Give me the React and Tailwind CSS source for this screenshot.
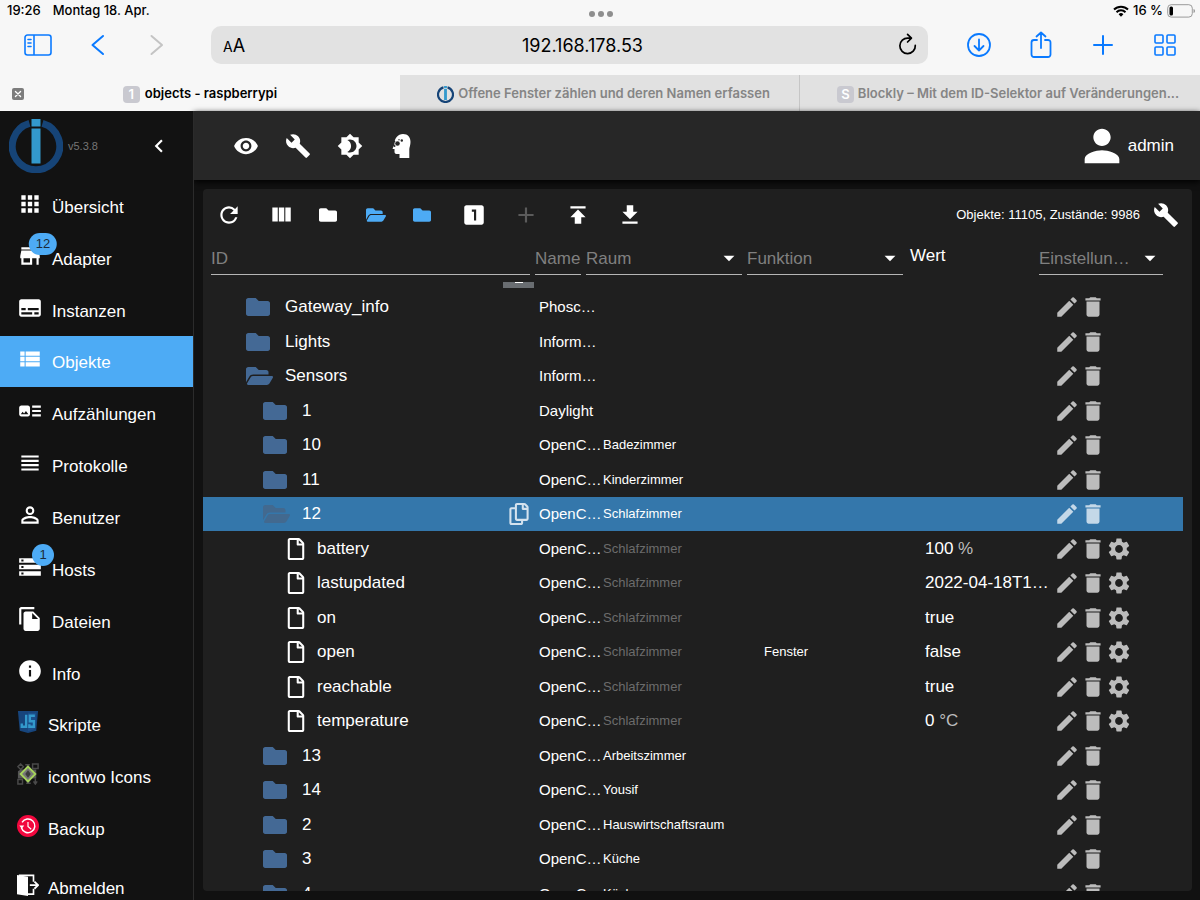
import React from "react";
import clsx from "clsx";
import {
  MdAdd,
  MdApps,
  MdArrowDropDown,
  MdArtTrack,
  MdBrightness4,
  MdBuild,
  MdChevronLeft,
  MdDelete,
  MdEdit,
  MdFileCopy,
  MdGetApp,
  MdInfo,
  MdLooksOne,
  MdPermIdentity,
  MdPerson,
  MdPublish,
  MdRefresh,
  MdSettings,
  MdStorage,
  MdStore,
  MdSubtitles,
  MdViewHeadline,
  MdViewList,
  MdVisibility,
} from "react-icons/md";
import { FaFolder, FaFolderOpen, FaRegCopy, FaRegFile } from "react-icons/fa";

const NAV_ITEMS = [
  { label: "Übersicht", icon: MdApps },
  { label: "Adapter", icon: MdStore, badge: 12 },
  { label: "Instanzen", icon: MdSubtitles },
  { label: "Objekte", icon: MdViewList, active: true },
  { label: "Aufzählungen", icon: MdArtTrack },
  { label: "Protokolle", icon: MdViewHeadline },
  { label: "Benutzer", icon: MdPermIdentity },
  { label: "Hosts", icon: MdStorage, badge: 1 },
  { label: "Dateien", icon: MdFileCopy },
  { label: "Info", icon: MdInfo },
  { label: "Skripte", icon: ScriptIcon, small: true },
  { label: "icontwo Icons", icon: IcontwoIcon, small: true },
  { label: "Backup", icon: BackupIcon, small: true },
];

const ROWS = [
  { id: "Gateway_info", type: "folder", level: 0, name: "Phosc…" },
  { id: "Lights", type: "folder", level: 0, name: "Inform…" },
  { id: "Sensors", type: "open", level: 0, name: "Inform…" },
  { id: "1", type: "folder", level: 1, name: "Daylight" },
  { id: "10", type: "folder", level: 1, name: "OpenC…", room: "Badezimmer" },
  { id: "11", type: "folder", level: 1, name: "OpenC…", room: "Kinderzimmer" },
  { id: "12", type: "open", level: 1, name: "OpenC…", room: "Schlafzimmer", selected: true },
  { id: "battery", type: "state", level: 2, name: "OpenC…", room: "Schlafzimmer", value: "100", unit: "%" },
  { id: "lastupdated", type: "state", level: 2, name: "OpenC…", room: "Schlafzimmer", value: "2022-04-18T1…" },
  { id: "on", type: "state", level: 2, name: "OpenC…", room: "Schlafzimmer", value: "true" },
  { id: "open", type: "state", level: 2, name: "OpenC…", room: "Schlafzimmer", func: "Fenster", value: "false" },
  { id: "reachable", type: "state", level: 2, name: "OpenC…", room: "Schlafzimmer", value: "true" },
  { id: "temperature", type: "state", level: 2, name: "OpenC…", room: "Schlafzimmer", value: "0", unit: "°C" },
  { id: "13", type: "folder", level: 1, name: "OpenC…", room: "Arbeitszimmer" },
  { id: "14", type: "folder", level: 1, name: "OpenC…", room: "Yousif" },
  { id: "2", type: "folder", level: 1, name: "OpenC…", room: "Hauswirtschaftsraum" },
  { id: "3", type: "folder", level: 1, name: "OpenC…", room: "Küche" },
  { id: "4", type: "folder", level: 1, name: "OpenC…", room: "Küche" },
];

const INDENT = ["pl-[43px]", "pl-[60px]", "pl-[84px]"];

/* ---------- icons ---------- */

function ScriptIcon({ className }) {
  return (
    <svg viewBox="0 0 24 24" className={className}>
      <path d="M1 0h22l-2 21.500L12 24l-9-2.500z" fill="#17457c" />
      <path d="M12 2h9l-1.700 18L12 22z" fill="#1c4f8b" />
      <path d="M10 4v13.200H5.200V13.500M19.500 5.200H14v6h4.500v6h-5V14.500" fill="none" stroke="#3399cc" strokeWidth="2.600" />
    </svg>
  );
}

function IcontwoIcon({ className }) {
  return (
    <svg viewBox="0 0 24 24" className={className}>
      <g fill="none" stroke="#4a4a4a" strokeWidth="1.600">
        <path d="M4 1l3 3-3 3-3-3zM17 1h6v5h-6zM1 18h5v5H1z" />
        <path d="M20 17v5M18 20l2 3 2-3M9 2h5M10 22h5" />
      </g>
      <path d="M4 7h4l4-5 4 5h5v10h-5l-4 6-4-6H1V9z" fill="#555" />
      <path d="M12 4l8 8-8 8-8-8z" fill="#777" stroke="#a6d45c" strokeWidth="2" />
      <path d="M12 8l3 4-3 4-3-4z" fill="#3b3b3b" />
    </svg>
  );
}

function BackupIcon({ className }) {
  return (
    <svg viewBox="0 0 24 24" className={className}>
      <circle cx="12" cy="12" r="12" fill="#f2083e" />
      <path d="M4.800 14a7.500 7.500 0 1 0 .7-6" fill="none" stroke="#fff" strokeWidth="1.600" />
      <path d="M2.500 11.500h5.400L5.200 15z" fill="#fff" />
      <path d="M12 7.500v5l3.500 3" fill="none" stroke="#fff" strokeWidth="1.300" />
    </svg>
  );
}

function LogoutIcon({ className }) {
  return (
    <svg viewBox="0 0 24 24" className={className} fill="none" stroke="#fff" strokeWidth="1.800">
      <path d="M0 1l12 2v21L0 22z" fill="#fff" stroke="none" />
      <path d="M2 1.500h16v7M11 22h7v-6" />
      <path d="M14 12.200h8.500M19 8.300l4 3.900-4 3.900" strokeWidth="2" />
    </svg>
  );
}

function ExpertIcon({ className }) {
  return (
    <svg viewBox="0 0 24 24" className={className}>
      <path d="M13 0c5 0 7.500 3.400 7.500 8 0 3-1 5-1.200 7v9H9.500v-4h-3C5 20 4.500 19 4.500 17.800V15H3.300c-.6 0-.8-.5-.5-1L4.500 10.500C4 4.500 8 0 13 0z" fill="#fff" />
      <g fill="#272727">
        <circle cx="7.500" cy="9.500" r="2.300" />
        <circle cx="11.800" cy="6.500" r="1.200" />
        <circle cx="4.300" cy="7.500" r="1" />
        <circle cx="4.600" cy="12" r=".9" />
        <circle cx="9" cy="5.800" r=".7" />
      </g>
    </svg>
  );
}

function ColumnsIcon({ className }) {
  return (
    <svg viewBox="0 0 24 24" className={className} fill="currentColor">
      <path d="M10 18h5V5h-5v13zm-6 0h5V5H4v13zM16 5v13h5V5h-5z" />
    </svg>
  );
}

function BrokerLogo({ className, ring = "#164477", bar = "#3399cc" }) {
  return (
    <svg viewBox="0 0 54 54" className={className}>
      <path d="M20.500 4.300a23.700 23.700 0 1 0 13 0" fill="none" stroke={ring} strokeWidth="7" />
      <path d="M22.500 0h9v7.500h-9zM22.500 9.500h9v35h-9z" fill={bar} />
    </svg>
  );
}

function LineIcon({ className = "w-7 h-7", d, width = 2 }) {
  return (
    <svg
      viewBox="0 0 28 28"
      className={className}
      fill="none"
      stroke="currentColor"
      strokeWidth={width}
      strokeLinecap="round"
      strokeLinejoin="round"
    >
      <path d={d} />
    </svg>
  );
}

/* ---------- browser frame ---------- */

function StatusBar() {
  return (
    <div className="grid grid-cols-3 items-center h-[22px] pl-[7px] pr-[5px] text-[13px] font-medium">
      <div className="flex gap-3">
        <span>19:26</span>
        <span>Montag 18. Apr.</span>
      </div>
      <div className="flex justify-center gap-[3px] pt-[5px]">
        <span className="w-[6px] h-[6px] rounded-full bg-[#8e8e8e]" />
        <span className="w-[6px] h-[6px] rounded-full bg-[#8e8e8e]" />
        <span className="w-[6px] h-[6px] rounded-full bg-[#8e8e8e]" />
      </div>
      <div className="flex items-center justify-end gap-1">
        <svg viewBox="0 0 16 12" className="w-4 h-3" fill="none" stroke="#000" strokeWidth="2">
          <path d="M1 4.500a10 10 0 0 1 14 0M3.500 7.200a6.400 6.400 0 0 1 9 0" />
          <path d="M5.600 9.200a3.500 3.500 0 0 1 4.800 0L8 11.800z" fill="#000" stroke="none" />
        </svg>
        <span>16 %</span>
        <svg viewBox="0 0 28 14" className="w-7 h-[14px]">
          <rect x=".7" y=".7" width="24.600" height="12.400" rx="3.500" fill="none" stroke="#9a9a9a" />
          <rect x="2.500" y="2.500" width="3.500" height="9" rx="1.500" fill="#000" />
          <path d="M26.500 5v4c1-.3 1.500-1 1.500-2s-.5-1.700-1.500-2z" fill="#9a9a9a" />
        </svg>
      </div>
    </div>
  );
}

function NavBar() {
  return (
    <div className="flex items-center h-[46px] pl-2 pr-1 text-[#0a7aff]">
      <button className="w-[59px] flex justify-center" aria-label="Seitenleiste">
        <LineIcon d="M3.500 4h21a2.500 2.500 0 0 1 2.500 2.500v15a2.500 2.500 0 0 1-2.500 2.500h-21A2.500 2.500 0 0 1 1 21.500v-15A2.500 2.500 0 0 1 3.500 4zM10 4v20M4 8.500h3M4 12h3M4 15.500h3" width={1.6} />
      </button>
      <button className="w-[59px] flex justify-center" aria-label="Zurück">
        <LineIcon d="M20 5L9.500 14 20 23" />
      </button>
      <button className="w-[59px] flex justify-center text-[#c4c4c4]" aria-label="Vorwärts">
        <LineIcon d="M9.500 5L20 14 9.500 23" />
      </button>
      <div className="flex-1 flex items-center h-[38px] ml-[26px] mr-5 rounded-[10px] bg-[#e2e2e2] text-black">
        <button className="w-[66px] pl-3 pt-[2px] text-left text-[18px] leading-6" aria-label="Darstellung">
          <span className="text-[14px]">A</span>A
        </button>
        <input
          className="flex-1 min-w-0 bg-transparent text-center text-[18px] outline-none"
          defaultValue="192.168.178.53"
          aria-label="Adresse"
        />
        <button className="w-10 flex justify-center" aria-label="Neu laden">
          <LineIcon className="w-6 h-6" d="M22.500 14.500a9 9 0 1 1-8.500-8.500h3.500M13.500 1.500l4.500 4.500-4.500 4.500" />
        </button>
      </div>
      <button className="w-[62px] flex justify-center" aria-label="Downloads">
        <LineIcon d="M14 3a11 11 0 1 1 0 22 11 11 0 0 1 0-22zM14 8.500v11M9.500 15l4.500 4.500 4.500-4.500" width={1.8} />
      </button>
      <button className="w-[62px] flex justify-center" aria-label="Teilen">
        <LineIcon d="M10 9H7a2.500 2.500 0 0 0-2.500 2.500v12A2.500 2.500 0 0 0 7 26h14a2.500 2.500 0 0 0 2.500-2.500v-12A2.500 2.500 0 0 0 21 9h-3M14 17V1.500M9.500 5.500L14 1.500l4.500 4" width={1.8} />
      </button>
      <button className="w-[62px] flex justify-center" aria-label="Neuer Tab">
        <LineIcon d="M14 5v18M5 14h18" />
      </button>
      <button className="w-[62px] flex justify-center" aria-label="Tabübersicht">
        <LineIcon d="M5 4h6a1 1 0 0 1 1 1v6a1 1 0 0 1-1 1H5a1 1 0 0 1-1-1V5a1 1 0 0 1 1-1zM17 4h6a1 1 0 0 1 1 1v6a1 1 0 0 1-1 1h-6a1 1 0 0 1-1-1V5a1 1 0 0 1 1-1zM5 16h6a1 1 0 0 1 1 1v6a1 1 0 0 1-1 1H5a1 1 0 0 1-1-1v-6a1 1 0 0 1 1-1zM17 16h6a1 1 0 0 1 1 1v6a1 1 0 0 1-1 1h-6a1 1 0 0 1-1-1v-6a1 1 0 0 1 1-1z" width={1.6} />
      </button>
    </div>
  );
}

function LetterBadge({ children }) {
  return (
    <span className="w-[17px] h-[17px] shrink-0 rounded bg-[#c9c9d0] text-white text-[13px] leading-[17px] text-center">
      {children}
    </span>
  );
}

function TabBar() {
  return (
    <div className="grid grid-cols-3 h-9 mt-[7px] text-[13px] font-semibold">
      <div className="flex items-center px-3 pt-[2px]">
        <button className="w-3 h-3 rounded-xs bg-[#7d7d7d] text-white" aria-label="Tab schließen">
          <LineIcon className="w-3 h-3" d="M8 8l12 12M20 8L8 20" width={3} />
        </button>
        <div className="flex-1 flex items-center justify-center gap-[5px] pr-3">
          <LetterBadge>1</LetterBadge>
          <span>objects - raspberrypi</span>
        </div>
      </div>
      <div className="flex items-center justify-center gap-1 pl-2 pt-[2px] bg-[#e1e1e1] border-r border-[#c6c6c6] text-[#858585]">
        <BrokerLogo className="w-[17px] h-[17px]" />
        <span className="truncate">Offene Fenster zählen und deren Namen erfassen</span>
      </div>
      <div className="flex items-center justify-center gap-1 pl-8 pr-4 pt-[2px] bg-[#e1e1e1] text-[#858585]">
        <LetterBadge>S</LetterBadge>
        <span className="truncate">Blockly – Mit dem ID-Selektor auf Veränderungen...</span>
      </div>
    </div>
  );
}

/* ---------- admin app ---------- */

function NavItem({ label, icon: Icon, badge, active, small }) {
  return (
    <a
      href="#"
      className={clsx("flex-1 min-h-0 flex items-center gap-[9px] pl-[17px]", active && "bg-[#4dabf5]")}
    >
      <span className="relative mb-1">
        <Icon className={small ? "w-[22px] h-[22px]" : "w-[26px] h-[26px]"} />
        {badge && (
          <span className="absolute -top-[10px] left-full -translate-x-1/2 min-w-[22px] h-[22px] px-[7px] rounded-full bg-[#4dabf5] text-[#1c2b38] text-[13px] leading-[22px] text-center">
            {badge}
          </span>
        )}
      </span>
      <span className="pt-1">{label}</span>
    </a>
  );
}

function Sidebar() {
  return (
    <aside className="relative z-10 w-[194px] shrink-0 flex flex-col bg-[#121212] border-r border-[#2b2b2b]">
      <div className="flex items-center h-[69px] pl-[9px] pr-[21px]">
        <BrokerLogo className="w-[54px] h-[54px]" />
        <span className="ml-[5px] text-[11px] text-[#767676]">v5.3.8</span>
        <button className="ml-auto" aria-label="Menü einklappen">
          <MdChevronLeft className="w-[26px] h-[26px]" stroke="currentColor" />
        </button>
      </div>
      <nav className="flex-1 min-h-0 flex flex-col">
        {NAV_ITEMS.map((item) => (
          <NavItem key={item.label} {...item} />
        ))}
      </nav>
      <a href="#" className="flex items-center gap-[9px] h-[46px] pl-[17px] pt-4">
        <LogoutIcon className="w-[22px] h-[22px]" />
        <span className="pt-2">Abmelden</span>
      </a>
    </aside>
  );
}

function ToolButton({ label, children, className }) {
  return (
    <button className={clsx("w-[52px] flex justify-center", className)} aria-label={label}>
      {children}
    </button>
  );
}

function TopBar() {
  return (
    <header className="flex items-center h-[69px] shrink-0 px-[26px] bg-[#272727] shadow-[0_2px_6px_#000]">
      <ToolButton label="Sichtbarkeit">
        <MdVisibility className="w-[26px] h-[26px]" />
      </ToolButton>
      <ToolButton label="Einstellungen">
        <MdBuild className="w-[26px] h-[26px]" />
      </ToolButton>
      <ToolButton label="Farbthema">
        <MdBrightness4 className="w-[26px] h-[26px]" />
      </ToolButton>
      <ToolButton label="Expertenmodus">
        <ExpertIcon className="w-6 h-6" />
      </ToolButton>
      <button className="ml-auto flex items-center">
        <MdPerson className="w-[52px] h-[52px]" />
        admin
      </button>
    </header>
  );
}

function Toolbar() {
  return (
    <div className="flex items-center h-[52px] shrink-0">
      <ToolButton label="Aktualisieren">
        <MdRefresh className="w-[26px] h-[26px]" />
      </ToolButton>
      <ToolButton label="Spalten">
        <ColumnsIcon className="w-[26px] h-[26px]" />
      </ToolButton>
      <button className="w-[47px] pl-3" aria-label="Alle zuklappen">
        <FaFolder className="w-[18px] h-[18px]" />
      </button>
      <button className="w-[47px] pl-3 text-[#4dabf5]" aria-label="Alle aufklappen">
        <FaFolderOpen className="w-5 h-[18px]" />
      </button>
      <button className="w-[47px] pl-3 text-[#4dabf5]" aria-label="Eine Ebene zuklappen">
        <FaFolder className="w-[18px] h-[18px]" />
      </button>
      <ToolButton label="Zustände anzeigen">
        <MdLooksOne className="w-[26px] h-[26px]" />
      </ToolButton>
      <ToolButton label="Hinzufügen" className="text-[#5b5b5b]">
        <MdAdd className="w-[26px] h-[26px]" />
      </ToolButton>
      <ToolButton label="Hochladen">
        <MdPublish className="w-[26px] h-[26px]" />
      </ToolButton>
      <ToolButton label="Herunterladen">
        <MdGetApp className="w-[26px] h-[26px]" />
      </ToolButton>
      <span className="ml-auto text-[13px]">Objekte: 11105, Zustände: 9986</span>
      <ToolButton label="Spalten konfigurieren">
        <MdBuild className="w-[26px] h-[26px]" />
      </ToolButton>
    </div>
  );
}

function FilterInput({ label }) {
  return (
    <input
      className="w-full min-w-0 pt-[2px] border-b border-[#b5b5b5] bg-transparent placeholder:text-[#808080] outline-none"
      placeholder={label}
      aria-label={label}
    />
  );
}

function FilterSelect({ label, text = label }) {
  return (
    <div className="relative flex border-b border-[#b5b5b5]">
      <select
        className="w-full appearance-none bg-transparent pt-[3px] pr-6 text-[#808080] outline-none"
        aria-label={label}
      >
        <option>{text}</option>
      </select>
      <MdArrowDropDown className="absolute right-0 top-1 w-[26px] h-[26px] pointer-events-none" />
    </div>
  );
}

function FilterRow() {
  return (
    <div className="grid grid-cols-[1fr_46px_156px_156px_126px_124px] gap-x-[5px] h-[34px] shrink-0 pl-2 pr-[29px]">
      <FilterInput label="ID" />
      <FilterInput label="Name" />
      <FilterSelect label="Raum" />
      <FilterSelect label="Funktion" />
      <span className="pl-[2px] leading-[30px]">Wert</span>
      <FilterSelect label="Einstellungen" text="Einstellun…" />
    </div>
  );
}

function RowIcon({ type, selected }) {
  if (type === "state") {
    return <FaRegFile className="w-[18px] h-[22px]" />;
  }
  const color = selected ? "text-[#42698f]" : "text-[#446995]";
  return (
    <span className={clsx("w-[27px]", color)}>
      {type === "open" ? <FaFolderOpen className="w-[27px] h-6" /> : <FaFolder className="w-6 h-6" />}
    </span>
  );
}

function ObjectRow({ row }) {
  const isState = row.type === "state";
  return (
    <tr className={clsx("h-[34px] even:h-[35px]", row.selected && "bg-[#3477ab]")}>
      <td>
        <div className={clsx("flex items-center gap-3 pr-[10px]", INDENT[row.level])}>
          <RowIcon type={row.type} selected={row.selected} />
          <span>{row.id}</span>
          {row.selected && (
            <button className="ml-auto text-[#d3e2ee]" aria-label="ID kopieren">
              <FaRegCopy className="w-5 h-[22px]" />
            </button>
          )}
        </div>
      </td>
      <td className="text-[15px] whitespace-nowrap">{row.name}</td>
      <td className={clsx("text-[13px]", isState && "text-[#6c6c6c]")}>{row.room}</td>
      <td className="text-[13px]">{row.func}</td>
      <td className="whitespace-nowrap">
        {row.value}
        {row.unit && <span className="text-[#bdbdbd]"> {row.unit}</span>}
      </td>
      <td>
        <div className={clsx("flex", row.selected ? "text-[#c4d8e8]" : "text-[#bcbcbc]")}>
          <button aria-label="Bearbeiten">
            <MdEdit className="w-[26px] h-[26px]" />
          </button>
          <button aria-label="Löschen">
            <MdDelete className="w-[26px] h-[26px]" />
          </button>
          {isState && (
            <button aria-label="Konfigurieren">
              <MdSettings className="w-[26px] h-[26px]" />
            </button>
          )}
        </div>
      </td>
    </tr>
  );
}

function ObjectTable() {
  return (
    <div className="flex-1 min-h-0 overflow-hidden mt-[7px] pr-[9px]">
      {/* lower edge of the copy button of the row scrolled out above */}
      <div className="flex justify-end h-2 pr-[649px]">
        <button className="w-[31px] h-[6px] flex justify-center bg-[#696d71]" aria-label="ID kopieren">
          <span className="w-2 h-px bg-white" />
        </button>
      </div>
      <table className="w-full table-fixed" aria-label="Objekte">
        <colgroup>
          <col />
          <col className="w-16" />
          <col className="w-[161px]" />
          <col className="w-[161px]" />
          <col className="w-[129px]" />
          <col className="w-[129px]" />
        </colgroup>
        <tbody>
          {ROWS.map((row) => (
            <ObjectRow key={row.id} row={row} />
          ))}
        </tbody>
      </table>
    </div>
  );
}

export default function App() {
  return (
    <div className="h-screen flex flex-col overflow-hidden">
      <div className="shrink-0 bg-[#f7f7f7] text-black font-['Inter',sans-serif]">
        <StatusBar />
        <NavBar />
        <TabBar />
      </div>
      <div className="flex-1 min-h-0 flex bg-[#111] text-white text-[17px] leading-6 font-['Liberation_Sans',sans-serif]">
        <Sidebar />
        <main className="flex-1 min-w-0 flex flex-col">
          <TopBar />
          <section className="flex-1 min-h-0 flex flex-col mt-[9px] mb-[9px] ml-[9px] mr-2 rounded bg-[#1f1f1f]">
            <Toolbar />
            <FilterRow />
            <ObjectTable />
          </section>
        </main>
      </div>
    </div>
  );
}
